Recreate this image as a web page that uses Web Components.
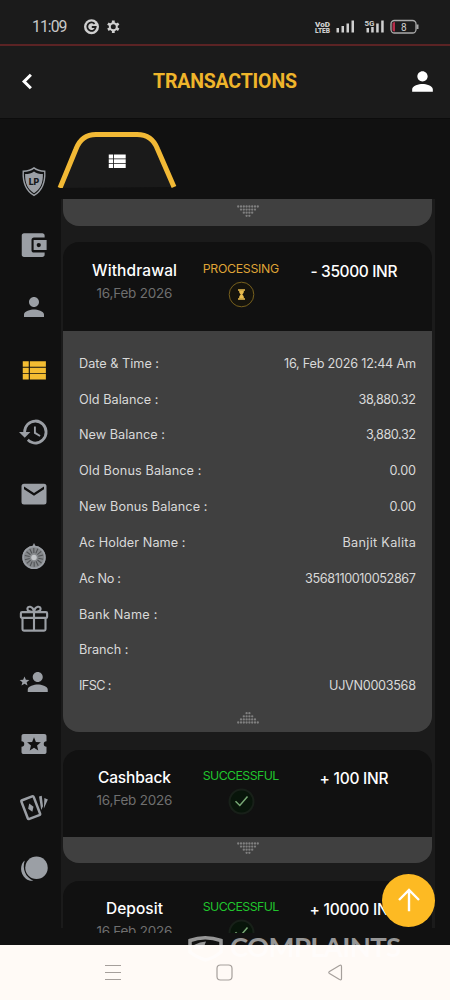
<!DOCTYPE html>
<html lang="en">
<head>
<meta charset="utf-8">
<title>Transactions</title>
<style>
html,body{margin:0;padding:0;background:#111}
body{width:450px;height:1000px;overflow:hidden;font-family:Inter,"Open Sans",sans-serif;color:#fff}
</style>
</head>
<body>
<app-screen></app-screen>
<script>
const define = (name, html, ready) => customElements.define(name, class extends HTMLElement {
  connectedCallback() {
    if (this.shadowRoot) return;
    const root = this.attachShadow({mode: 'open'});
    root.innerHTML = typeof html === 'function' ? html(this) : html;
    if (ready) ready(this, root);
  }
});

/* Text tracked to a given advance width. */
define('fit-text', el => `<style>:host{display:inline-block;white-space:nowrap}span{display:inline-block}</style><span>${el.getAttribute('text')}</span>`, (el, root) => {
  const s = root.querySelector('span'), target = +el.getAttribute('w');
  const n = [...s.textContent].length, now = s.getBoundingClientRect().width;
  if (target && now) {
    const sp = (target - now) / (n - 1);
    s.style.letterSpacing = sp.toFixed(3) + 'px';
    s.style.marginRight = (-sp).toFixed(3) + 'px';
  }
});

const person = '<path d="M12 12c2.200 0 4-1.800 4-4s-1.800-4-4-4-4 1.800-4 4 1.800 4 4 4zm0 2c-2.700 0-8 1.300-8 4v2h16v-2c0-2.700-5.300-4-8-4z"/>';
const list = '<path d="M3 5h4.800v4.400H3zm5.700 0h12.800v4.400H8.700zM3 10.100h4.800v4.400H3zm5.700 0h12.800v4.400H8.700zM3 15.200h4.800v4.400H3zm5.700 0h12.800v4.400H8.700z"/>';
const star = 'M12 6.600l1.500 3.700 4 .300-3.050 2.600.95 3.900L12 15l-3.400 2.100.95-3.900-3.050-2.600 4-.3z';
const icons = {
  person, list,
  back: '<path d="M15 6l-6 6 6 6" fill="none" stroke="currentColor" stroke-width="2.700"/>',
  shield: `<path d="M12 1.800c2.600 2 5.300 2.400 8.600 2.500.500 8.800-1.900 14.300-8.600 17.900C5.300 18.600 2.900 13.100 3.400 4.300 6.700 4.200 9.400 3.800 12 1.800z" transform="translate(0 -1.200) scale(1 1.080)" fill="none" stroke="currentColor" stroke-width="1.100"/><path d="M12 3.500c2 1.500 4.200 2 7.100 2.100.200 7.300-1.900 12.300-7.100 15.300-5.200-3-7.300-8-7.100-15.300C7.800 5.500 10 5 12 3.500z"/><text x="12" y="14" font-size="7" font-weight="800" text-anchor="middle" fill="#15181b" font-family="Inter,sans-serif">LP</text>`,
  wallet: '<path d="M21 18v1.700c0 1-.8 1.800-1.800 1.800H4.500c-1.100 0-1.800-.8-1.800-1.800V4.300c0-1 .7-1.800 1.800-1.800h14.700c1 0 1.800.8 1.800 1.800V6h-8.500c-1.200 0-2 .8-2 1.900v8.200c0 1.100.8 1.900 2 1.900zm-8.800-2h10.400V8H12.200zm4.100-2.300a1.700 1.700 0 110-3.400 1.700 1.700 0 010 3.400z" fill-rule="evenodd" transform="translate(-.5 0)"/>',
  history: '<path d="M13.500 3a9 9 0 00-9 9H1.300l4.300 4.200L9.800 12H6.500a7 7 0 117 7c-1.900 0-3.700-.8-4.900-2.100l-1.400 1.400A9 9 0 1013.500 3zm-1 5v5l4.200 2.500.700-1.200-3.500-2.100V8z" transform="translate(-1.400 -1.200) scale(1.070 1.100)"/>',
  mail: '<path d="M20 3.700H4a2 2 0 00-2 2v12.600a2 2 0 002 2h16a2 2 0 002-2V5.700a2 2 0 00-2-2zm0 4.400l-8 5.200-8-5.200V6l8 5.200L20 6z"/>',
  wheel: '<circle cx="12" cy="12.300" r="9.300" fill="#85888b"/><circle cx="12" cy="12.300" r="8.700" fill="none" stroke="#9b9fa5" stroke-width="1.300"/><path d="M12 .7l1.600 3.300h-3.200z"/><g stroke="#515356" stroke-width=".9">' + Array.from({length:14},(_,i)=>{const a=i*Math.PI/7+.2;return `<path d="M${(12+3.500*Math.cos(a)).toFixed(2)} ${(12.300+3.500*Math.sin(a)).toFixed(2)}L${(12+7.500*Math.cos(a)).toFixed(2)} ${(12.300+7.500*Math.sin(a)).toFixed(2)}"/>`}).join('') + '</g><circle cx="12" cy="12.300" r="2.200" fill="#c4c7ca"/>',
  gift: '<g fill="none" stroke="currentColor" stroke-width="1.700"><rect x="1.500" y="6.500" width="21" height="4.600" rx="1"/><path d="M2.800 11v9.200c0 .7.4 1.100 1.100 1.100h16.200c.7 0 1.100-.4 1.100-1.100V11M12 6v15.300M12 6.300C9.500 6.300 6.700 6 6.700 4c0-2.600 4.300-2.900 5.300 2.300 1-5.200 5.300-4.900 5.300-2.300 0 2-2.800 2.300-5.300 2.300z"/></g>',
  refer: '<g transform="translate(3 0)">' + person + '</g><path d="M4.400 7.500l1.100 2.600 2.800.2-2.200 1.800.7 2.700-2.400-1.500L2 14.800l.7-2.700L.5 10.300l2.800-.2z"/>',
  ticket: '<path d="M22 9.800V5.700c0-1.100-.7-1.700-1.800-1.700H3.800C2.700 4 2 4.600 2 5.700v4.100a2.200 2.200 0 010 4.400v4.100c0 1.100.7 1.700 1.800 1.700h16.400c1.100 0 1.800-.6 1.800-1.700v-4.100a2.200 2.200 0 010-4.400zM' + star.slice(1) + '" fill-rule="evenodd"/>',
  cards: '<g transform="rotate(-21 10 12)"><rect x="4" y="4.300" width="10.500" height="16" rx="1" fill="none" stroke="currentColor" stroke-width="2"/><path d="M9.300 8.800l2.300 3.500-2.300 3.500L7 12.300z"/></g><path d="M16 3.500l2.200-.6 1 8.500-1.400 2.900zM20.300 4.700l2.800 1.200-3.200 7.300z"/>',
  balls: '<circle cx="14" cy="11" r="9"/><path d="M4.600 5.200C.8 8 .3 15.500 5.500 19.800c2.100 1.700 4.300 1.900 6 1.500C5.300 18.800 2.300 12 4.600 5.200z"/>',
  up: '<path d="M12 21V4M4 12L12 4l8 8" fill="none" stroke="currentColor" stroke-width="1.900"/>'
};
define('ui-icon', el => `<style>:host{display:block;width:var(--s,30px);height:var(--s,30px)}svg{display:block;width:100%;height:100%;overflow:visible}</style><svg viewBox="0 0 24 24" fill="currentColor">${icons[el.getAttribute('name')]}</svg>`);

define('status-bar', `<style>
:host{display:flex;height:44px;box-sizing:border-box;padding:9px 31px 0 32px;background:#1b1b1b;align-items:center;color:#c9c9c9;font-family:Roboto,sans-serif}
svg{display:block}.t{font-size:15.800px;width:52px}.r{margin-left:auto}</style>
<div class="t"><fit-text text="11:09" w="35.500"></fit-text></div>
<svg width="37" height="16" viewBox="0 0 37 16"><circle cx="7.500" cy="7.700" r="7.500" fill="#cfcfcf"/><path d="M10.600 4.800A4.200 4.200 0 1011.700 8H7.800" fill="none" stroke="#1b1b1b" stroke-width="1.800"/>
<g transform="translate(29.300 7.700)" fill="none" stroke="#cfcfcf"><circle r="3.500" stroke-width="2"/><path d="M0-6.200V-3.500M0 6.200V3.500M-5.400-3.100L-3-1.700M5.400 3.100L3 1.700M-5.400 3.100L-3 1.700M5.400-3.100L3-1.700" stroke-width="2.800"/></g></svg>
<svg class="r" width="105" height="20" viewBox="314 16.500 105 20" fill="#cfcfcf" font-family="Roboto,sans-serif"><g font-weight="900" font-size="8"><text x="315" y="26" textLength="15" lengthAdjust="spacingAndGlyphs">VoD</text><text x="315" y="32.800" textLength="15" lengthAdjust="spacingAndGlyphs">LTEB</text></g>
<path d="M336.500 27.500h2.500V32h-2.500zM341.500 25.500h2.500V32h-2.500zM346.500 23h2.500v9h-2.500zM351.500 20h2.500v12h-2.500zM366.500 27.500h2.500V32h-2.500zM371.200 26.500h2.500V32h-2.500zM376.200 23h2.500v9h-2.500zM381.200 20h2.500v12h-2.500z"/><text x="364.500" y="25.300" font-size="8" font-weight="700" textLength="10">5G</text>
<rect x="391" y="20" width="25" height="12.500" rx="3.500" fill="none" stroke="#aaa" stroke-width="1.300"/><path d="M416.500 24h2v4.500h-2z" fill="#aaa"/><path d="M392.500 23q0-1.500 2.500-1.500V31q-2.500 0-2.500-1.500z" fill="#b52c48"/><text x="403.700" y="30" font-size="10" text-anchor="middle">8</text></svg>`);

define('app-header', `<style>
:host{display:grid;grid-template-columns:60px 1fr 60px;align-items:center;height:75px;box-sizing:border-box;padding-bottom:1px;background:#1b1b1b;border-top:2px solid #5b2324;border-bottom:1px solid #0c0c0c}
.b{--s:27px;margin-left:14px}.p{--s:31px;margin-left:17px}h1{margin:0;font:700 19.500px/24px Roboto,sans-serif;text-align:center;color:#efb52b}</style>
<ui-icon class="b" name="back"></ui-icon><h1><fit-text text="TRANSACTIONS" w="144"></fit-text></h1><ui-icon class="p" name="person"></ui-icon>`);

define('side-rail', `<style>:host{display:flex;flex-direction:column;width:57px;padding-top:32px;color:#9b9fa5}
div{height:62.450px;display:flex;align-items:center;padding-left:19px;box-sizing:border-box}.on{color:#f4bd32}</style>` +
['shield','wallet','person','list','history','mail','wheel','gift','refer','ticket','cards','balls'].map(n => `<div class="${n==='list'?'on':''}"><ui-icon name="${n}"></ui-icon></div>`).join(''));

define('dot-arrow', el => {
  let d = '';
  [8,6,4,2].forEach((n, r) => { for (let i = 0; i < n; i++) d += `<circle cx="${11 + (i - (n-1)/2)*2.800}" cy="${1.500 + r*3.100}" r="1.150"/>`; });
  return `<style>:host{display:block;width:22px;height:13px}:host([up]){transform:rotate(180deg)}svg{display:block}</style><svg width="22" height="13" fill="#808080">${d}</svg>`;
});

const badges = {
  PROCESSING: ['#dfa336', '<circle cx="13.500" cy="13.500" r="12.300" fill="#15130c" stroke="#77601e"/><path d="M10 9h7M10 18h7" stroke="#e8bc4e" stroke-width="1.500"/><path d="M11 9.500h5q0 2.800-1.700 4 1.700 1.200 1.700 4h-5q0-2.800 1.700-4-1.700-1.200-1.700-4z" fill="#e8bc4e"/>'],
  SUCCESSFUL: ['#20c52d', '<circle cx="13.500" cy="13.500" r="12" fill="#08150a" stroke="#182019" stroke-width="2"/><path d="M7.500 13.300l4.300 4.200 7.700-9" fill="none" stroke="#78a875" stroke-width="1.500"/>']
};
define('txn-card', el => {
  const a = n => el.getAttribute(n), [c, g] = badges[a('status')];
  return `<style>
:host{display:block;width:369px;margin-bottom:17.500px}
header{display:grid;grid-template-columns:143px 70px 156px;justify-items:center;height:var(--h,87px);padding-top:var(--p,18px);box-sizing:border-box;background:#111;border-radius:16px 16px 0 0}
header>div{display:flex;flex-direction:column;align-items:center}
.n{font-size:15.500px;line-height:20px;font-weight:500}.d{font-size:13.500px;line-height:20px;padding-top:2px;color:#6f6f6f}
.s{font-size:12.300px;line-height:16px;color:${c}}.g{padding-top:4px}.a{padding-top:1px}svg{display:block}
footer{background:#404040;border-radius:0 0 16px 16px}</style>
<header><div><fit-text class="n" text="${a('name')}" w="${a('nw')}"></fit-text><fit-text class="d" text="16,Feb 2026" w="76"></fit-text></div>
<div><fit-text class="s" text="${a('status')}" w="76.500"></fit-text><svg class="g" width="27" height="27" viewBox="0 0 27 27">${g}</svg></div>
<fit-text class="n a" text="${a('amount')}" w="${a('aw')}"></fit-text></header><footer><slot></slot></footer>`;
});
define('card-foot', el => `<style>:host{display:flex;justify-content:center;align-items:center;height:26.500px;box-sizing:border-box;padding:0 0 2px}</style><dot-arrow ${el.hasAttribute('up')?'up':''}></dot-arrow>`);
define('detail-row', el => `<style>:host{display:flex;justify-content:space-between;align-items:center;height:35.850px;padding:0 16px;font-size:12.700px;color:#d9d9d9}</style><fit-text text="${el.getAttribute('k')}" w="${el.getAttribute('kw')}"></fit-text><fit-text text="${el.getAttribute('v')||''}" w="${el.getAttribute('vw')||0}"></fit-text>`);

const rows = [['Date &amp; Time :',80,'16, Feb 2026 12:44 Am',132],['Old Balance :',79.500,'38,880.32',57.500],['New Balance :',86,'3,880.32',50],['Old Bonus Balance :',122.500,'0.00',26.500],['New Bonus Balance :',128.500,'0.00',26.500],['Ac Holder Name :',106.500,'Banjit Kalita',73.500],['Ac No :',42,'3568110010052867',111],['Bank Name :',78.500,'',0],['Branch :',49.500,'',0],['IFSC :',32.500,'UJVN0003568',87]];
define('txn-list', `<style>
:host{display:block;width:374px;height:745px;overflow:hidden;margin-left:4px;background:linear-gradient(#111 0 11px,#1b1b1b 11px 740px,#111 740px)}
.in{padding:11px 0 0 2px}.top{height:26.500px;background:#404040;border-radius:0 0 16px 16px;margin-bottom:16px;width:369px}
.rows{padding:14.500px 0 2px}.open{--p:19.500px;--h:89.300px}</style>
<div class="in"><div class="top"><card-foot></card-foot></div>
<txn-card class="open" name="Withdrawal" nw="85" status="PROCESSING" amount="- 35000 INR" aw="87"><div class="rows">${rows.map(r=>`<detail-row k="${r[0]}" kw="${r[1]}" v="${r[2]}" vw="${r[3]}"></detail-row>`).join('')}</div><card-foot up></card-foot></txn-card>
<txn-card name="Cashback" nw="73" status="SUCCESSFUL" amount="+ 100 INR" aw="69"><card-foot></card-foot></txn-card>
<txn-card name="Deposit" nw="57" status="SUCCESSFUL" amount="+ 10000 INR" aw="89"><card-foot></card-foot></txn-card></div>`);

define('tab-button', `<style>:host{display:block;width:120px;height:56px;position:relative}svg{display:block}ui-icon{--s:22px;position:absolute;left:49px;top:18px}</style>
<svg width="120" height="56" viewBox="0 0 120 56"><path d="M3 56L19 17Q24.500 2.500 39 2.500H80Q95 2.500 100.500 17L117 55" fill="#1a1a1a"/><path d="M3 56L19 17Q24.500 2.500 39 2.500H80Q95 2.500 100.500 17L117 55" fill="none" stroke="#f2b935" stroke-width="5"/></svg><ui-icon name="list"></ui-icon>`);

define('nav-bar', `<style>:host{display:block;height:55px;background:#fffaf6}svg{display:block}</style>
<svg width="450" height="55" fill="none" stroke="#a59f9b" stroke-width="1.200"><path d="M105 20.500h16M105 27.500h16M105 34.500h16"/><rect x="217" y="20" width="15" height="15" rx="3.500"/><path d="M341.500 21.500v12q0 2-2 1l-10-6q-1.500-1 0-2l10-6q2-1 2 1z"/></svg>`);

define('water-mark', `<style>:host{display:flex;align-items:flex-start;gap:7px;color:#fff;opacity:.56;font-family:Lato,sans-serif;font-weight:700;font-size:27.500px;line-height:30px}svg{display:block;margin-top:3px}</style>
<svg width="35" height="27" viewBox="0 0 35 27"><path d="M2 17V5.500Q17 0 33 5.500V17Q26 23 17.500 25Q8 22 2 17z" fill="none" stroke="#fff" stroke-width="3.500"/><path d="M6 10Q12 6.500 18 6.500L15 14H6z" fill="#fff"/></svg><fit-text text="COMPLAINTS" w="171"></fit-text>`);

define('app-screen', `<style>
:host{display:flex;flex-direction:column;width:450px;height:1000px;background:#111;position:relative;overflow:hidden}
main{display:flex;height:826px}.c{padding-top:13px}
.fab{position:absolute;left:382px;top:873.500px;width:53px;height:53px;border-radius:50%;background:#fdba23;display:flex;align-items:center;justify-content:center;--s:30px}
water-mark{position:absolute;left:188px;top:932px}</style>
<status-bar></status-bar><app-header></app-header><main><side-rail></side-rail><div class="c"><tab-button></tab-button><txn-list></txn-list></div></main><nav-bar></nav-bar><water-mark></water-mark><div class="fab"><ui-icon name="up"></ui-icon></div>`);
</script>
</body>
</html>
